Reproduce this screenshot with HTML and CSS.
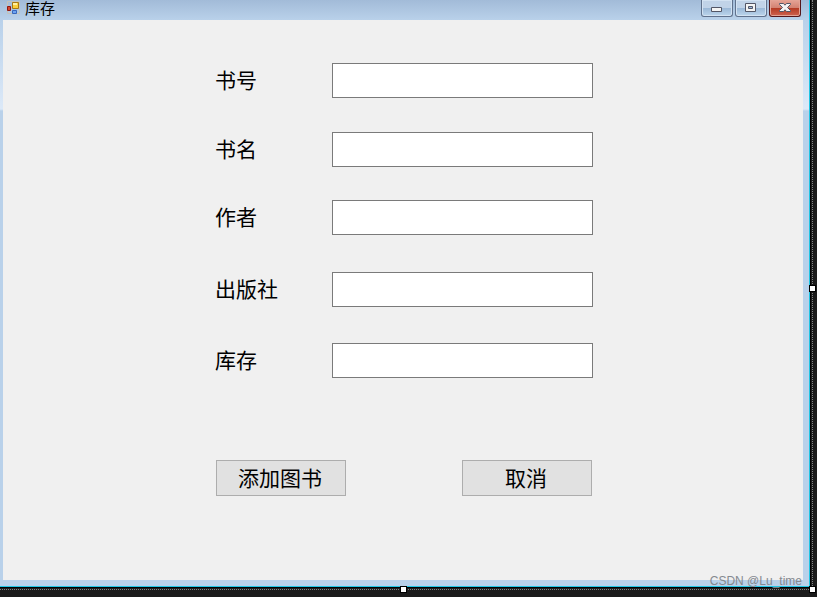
FILE: index.html
```html
<!DOCTYPE html>
<html lang="zh-CN">
<head>
<meta charset="utf-8">
<title>库存</title>
<link rel="stylesheet" href="styles.css">
</head>
<body>
<main class="window">
  <header class="titlebar">
    <svg class="app-icon" width="14" height="15" viewBox="0 0 14 15" aria-hidden="true">
      <path d="M.5 1.500h12v12h-12z" fill="none" stroke="#c6c3b8" stroke-width="1"/>
      <path d="M5.500 2.500h6v6h-6z" fill="#fbcf3c" stroke="#a97912"/>
      <path d="M6 3h4v2h-4z" fill="#fff0a0"/>
      <path d="M.5 6.500h3v4h-3z" fill="#d8452e" stroke="#8e1712"/>
      <path d="M5.500 10.500h4v3h-4z" fill="#6ea3f0" stroke="#3767bd"/>
    </svg>
    <h1 class="title">库存</h1>
    <div class="controls">
      <button class="control" type="button" aria-label="最小化">
        <svg width="30" height="16" viewBox="0 0 30 16"><path d="M9.500 7.500h10v4h-10z" fill="#f4f4f4" stroke="#535666"/></svg>
      </button>
      <button class="control" type="button" aria-label="最大化">
        <svg width="30" height="16" viewBox="0 0 30 16"><path d="M9.500 3.500h10v8h-10z" fill="#f4f4f4" stroke="#535666"/><path d="M12.500 6.500h4v2h-4z" fill="#9db9dd" stroke="#535666"/></svg>
      </button>
      <button class="control close" type="button" aria-label="关闭">
        <svg width="30" height="16" viewBox="0 0 30 16"><path d="M9.500 3.500h4l1.500 1.700 1.500-1.700h4v1l-3 3 3 3v1h-4l-1.500-1.700-1.500 1.700h-4v-1l3-3-3-3z" fill="#f4f4f4" stroke="#535666"/></svg>
      </button>
    </div>
  </header>
  <div class="client">
    <form class="form">
      <label for="book-id">书号</label>
      <input id="book-id" type="text">
      <label for="book-name">书名</label>
      <input id="book-name" type="text">
      <label for="author">作者</label>
      <input id="author" type="text">
      <label for="publisher">出版社</label>
      <input id="publisher" type="text">
      <label for="stock">库存</label>
      <input id="stock" type="text">
      <div class="actions">
        <button class="action" type="button">添加图书</button>
        <button class="action" type="button">取消</button>
      </div>
    </form>
  </div>
</main>
<div class="selection">
  <span class="handle right"></span>
  <span class="handle bottom"></span>
  <span class="handle corner"></span>
</div>
<div class="watermark">CSDN @Lu_time</div>
</body>
</html>
```
FILE: styles.css
```css
* {
  box-sizing: border-box;
}

body {
  margin: 0;
  min-height: 100vh;
  padding: 0 6px 9px 0;
  display: flex;
  position: relative;
  background: #1b1b1b;
  color: #000;
  font-family: "Noto Sans CJK SC", sans-serif;
  font-weight: 400;
}

.window {
  flex: 1;
  display: flex;
  flex-direction: column;
  background: linear-gradient(#a2bbd8, #b9d1ea 20px, #dce9f8 109px, #b9d1ea 111px);
  border: solid #000;
  border-width: 0 1px 1px 0;
  box-shadow: inset -1px -1px #1fc5e4;
}

.titlebar {
  height: 20px;
  padding: 0 9px 0 7px;
  display: flex;
  align-items: flex-start;
}

.app-icon {
  margin-right: 4px;
}

.title {
  margin: 0;
  font-size: 15px;
  font-weight: 400;
  line-height: 16px;
}

.controls {
  margin-left: auto;
  display: flex;
  gap: 2px;
}

.control {
  width: 32px;
  height: 17px;
  padding: 0;
  border: 1px solid #60718c;
  border-top: 0;
  border-radius: 0 0 3px 3px;
  background: linear-gradient(#c1d3e8 8px, #9ab7d6 8px, #bcd5ec);
  box-shadow: inset 0 0 0 1px #d3e2f2;
}

.close {
  border-color: #55161a;
  background: linear-gradient(#e5a496, #d28170 8px, #b43a22 8px, #ce6350);
  box-shadow: inset 0 0 0 1px #e3a394;
}

.control svg {
  display: block;
}

.client {
  flex: 1;
  margin: 0 7px 7px 3px;
  padding: 43px 0 0 2px;
  background: #f0f0f0;
  font-size: 21px;
}

.form {
  width: 378px;
  margin: 0 auto;
  display: grid;
  grid-template-columns: 117px 1fr;
  grid-template-rows: 69px 68px 72px 71px 117px 36px;
  align-items: start;
}

label {
  line-height: 33px;
}

input {
  width: 100%;
  height: 35px;
  padding: 0 6px;
  border: 1px solid #7a7a7a;
  background: #fff;
  font: inherit;
}

.actions {
  grid-column: 1 / -1;
  padding: 0 1px;
  display: flex;
  justify-content: space-between;
}

.action {
  width: 130px;
  height: 36px;
  padding: 0 2px 2px 0;
  border: 1px solid #adadad;
  background: #e1e1e1;
  color: inherit;
  font: inherit;
  line-height: 32px;
}

/* Designer selection frame drawn around the window */
.selection {
  position: absolute;
  inset: 0 4px 7px 0;
  border: dotted #858585;
  border-width: 0 1px 1px 0;
}

.handle {
  position: absolute;
  width: 7px;
  height: 7px;
  border: 1px solid #000;
  background: #fff;
}

.right {
  right: -4px;
  top: calc(50% - 10px);
}

.bottom {
  left: calc(50% - 6px);
  bottom: -4px;
}

.corner {
  right: -4px;
  bottom: -4px;
}

.watermark {
  position: absolute;
  right: 15px;
  bottom: 8px;
  color: #858a90;
  font: 12px/16px "Liberation Sans", sans-serif;
}
```
